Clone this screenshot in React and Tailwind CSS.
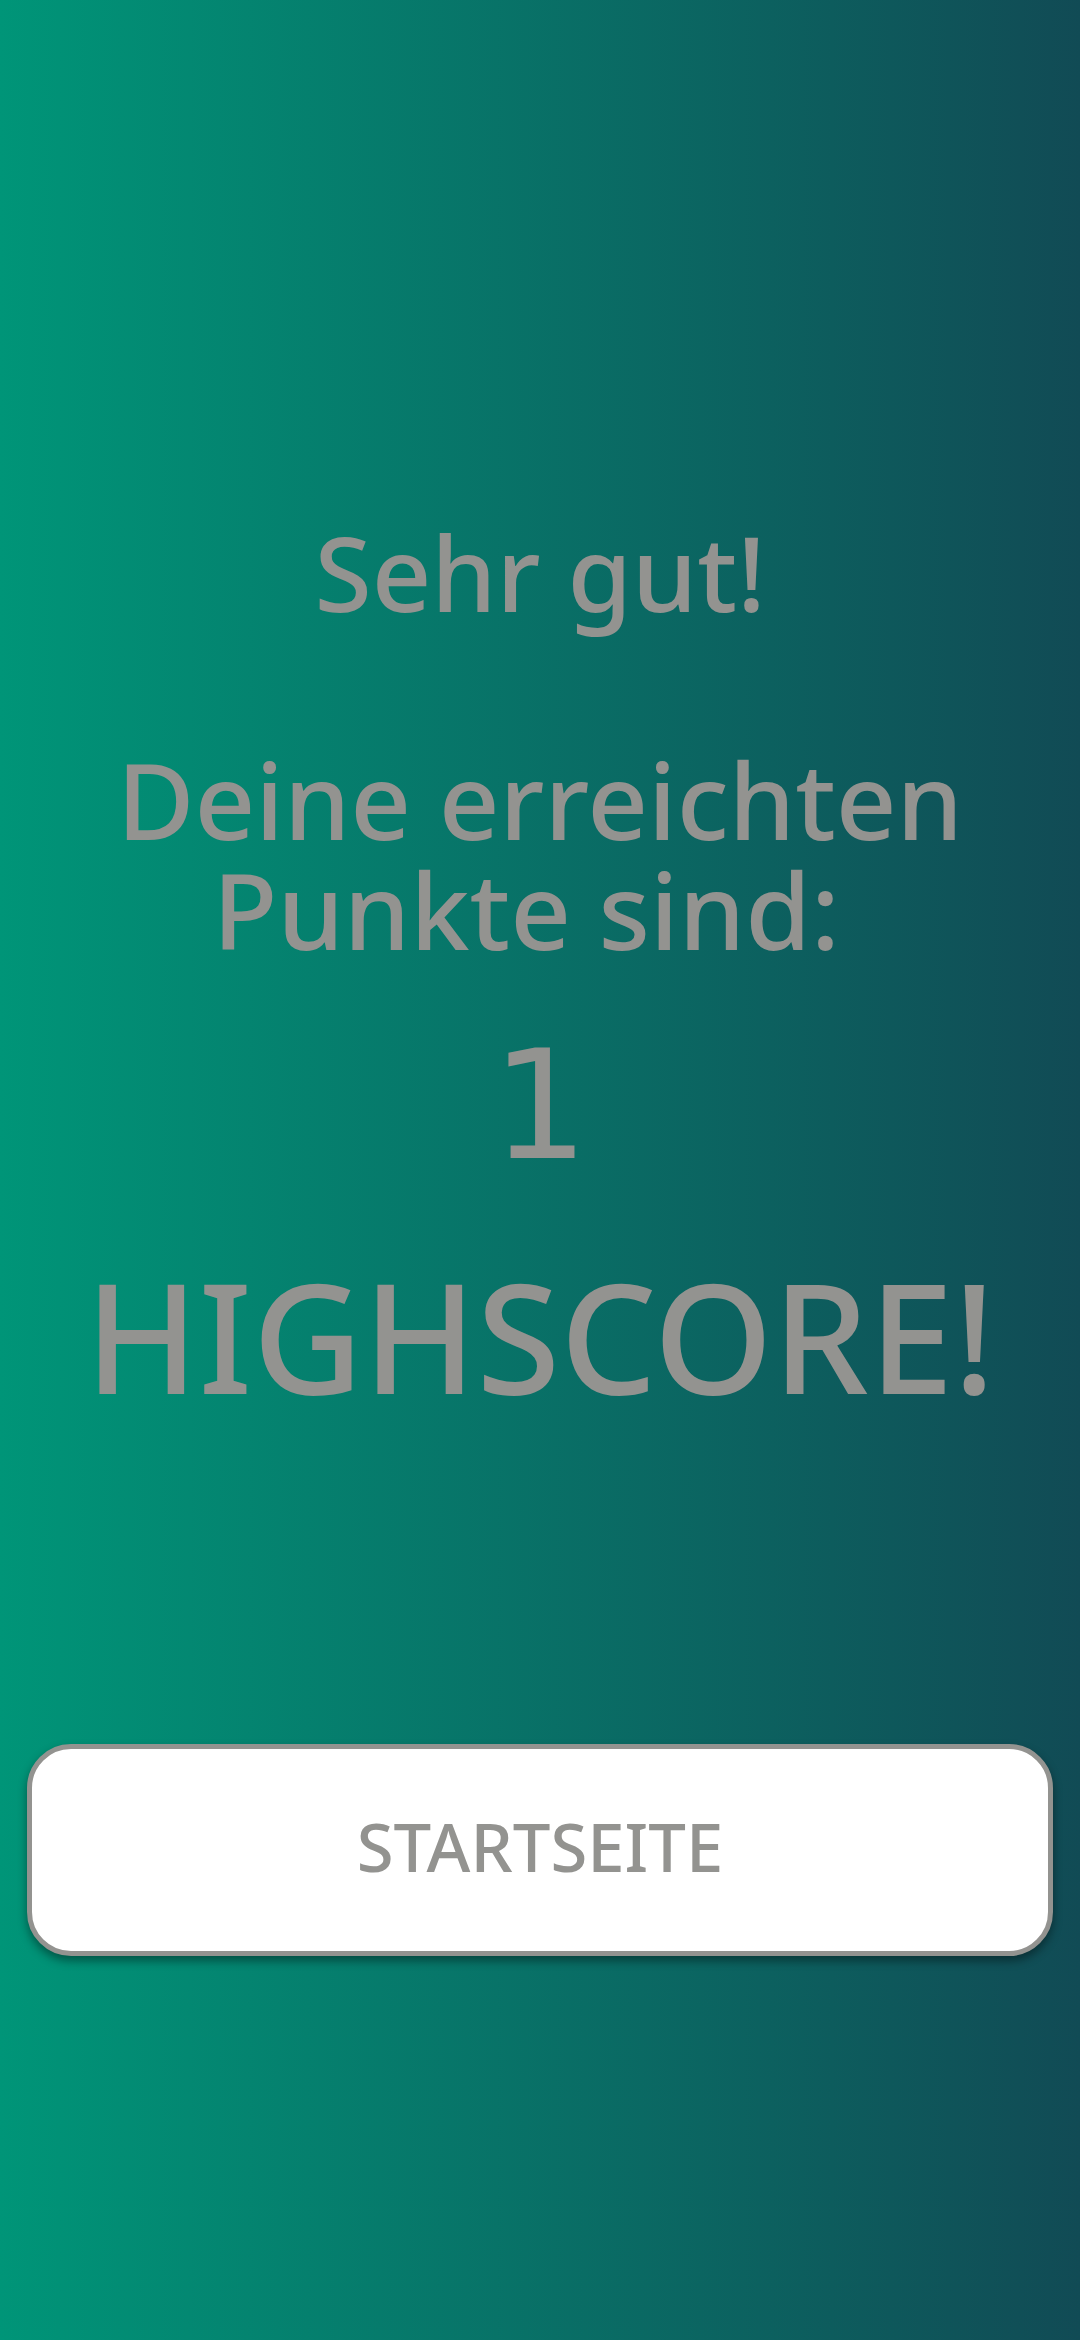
export default function App() {
  return (
    <main className="flex min-h-screen w-full flex-col items-center bg-linear-to-r/srgb from-[#009578] to-[#114b55] pt-[512px] text-center font-['Noto_Sans',sans-serif] font-medium text-[#939390]">
      <h1 className="text-[104px] leading-[120px] font-medium">Sehr gut!</h1>
      <p className="mt-28 text-[106px] leading-[110px]">
        Deine erreichten
        <br />
        Punkte sind:&nbsp;
      </p>
      <p className="mt-[52px] font-['DejaVu_Sans',sans-serif] text-[152px] leading-[180px]">1</p>
      <p className="mt-[50px] text-[152px] leading-[180px]">HIGHSCORE!</p>
      <div className="mt-[318px] w-full px-[27px]">
        <button
          type="button"
          className="h-[212px] w-full rounded-[44px] border-[5px] border-[#939390] bg-white pb-2 text-[67px] font-medium shadow-[0_5px_10px_rgba(0,0,0,0.4)]"
        >
          STARTSEITE
        </button>
      </div>
    </main>
  );
}
